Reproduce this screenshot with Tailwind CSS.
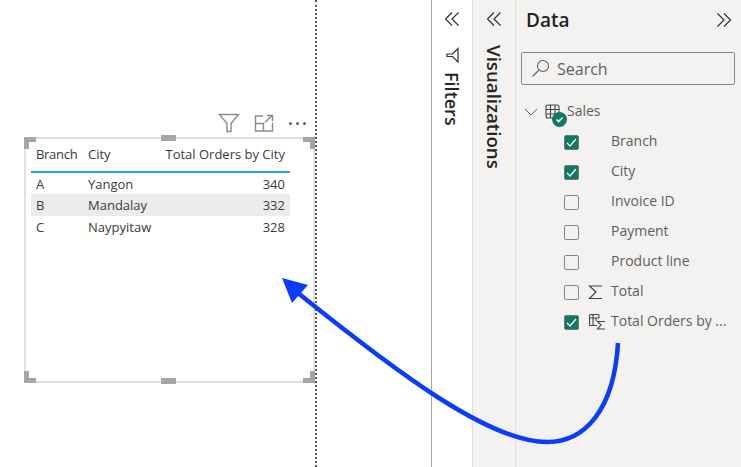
<!DOCTYPE html>
<html lang="en">
<head>
    <meta charset="UTF-8">
    <title>Data pane</title>
    <script src="https://cdn.jsdelivr.net/npm/@tailwindcss/browser@4"></script>
</head>
<body class="bg-white overflow-hidden font-['Open_Sans',sans-serif]">
<div class="relative flex w-[741px] h-[467px] overflow-hidden">

    <!-- report canvas -->
    <div class="relative w-[431px] h-full bg-white shrink-0">
        <div class="absolute left-[315px] top-0 h-full border-l-2 border-dotted border-[#5a5a5a]"></div>

        <!-- visual header -->
        <div class="absolute left-[218px] top-[112px] flex items-center gap-[14px] text-[#8a8a8a]">
            <svg width="22" height="22" viewBox="0 0 22 22" fill="none" stroke="#8a8a8a" stroke-width="1.4"><path d="M1.500 2.500h19l-7.500 9v8h-4v-8z"/></svg>
            <svg width="20" height="20" viewBox="0 0 20 20" fill="none" stroke="#8a8a8a" stroke-width="1.4"><path d="M9 3H1.500v15h17V9.500M1.500 10.500H9.500V18M11 9.500L18 2.500M13 2.500h5.500V8"/></svg>
            <div class="flex gap-[4px] ml-[1px]">
                <span class="w-[3px] h-[3px] rounded-full bg-[#666]"></span>
                <span class="w-[3px] h-[3px] rounded-full bg-[#666]"></span>
                <span class="w-[3px] h-[3px] rounded-full bg-[#666]"></span>
            </div>
        </div>

        <!-- table visual -->
        <div class="absolute left-[24px] top-[137px] w-[291px] h-[246px] border-2 border-[#e1e1e1] pl-[5px] pr-[23px] text-[13px] leading-[21px] text-[#3b3a39]">
            <div class="grid grid-cols-[52px_76px_1fr] h-[34px] border-b-2 border-[#2d9cf0] px-[5px] pt-[5px]">
                <span class="tracking-[-0.3px]">Branch</span><span>City</span><span class="text-right">Total Orders by City</span>
            </div>
            <div class="grid grid-cols-[52px_76px_1fr] h-[21px] px-[5px] pt-[1px]">
                <span>A</span><span>Yangon</span><span class="text-right">340</span>
            </div>
            <div class="grid grid-cols-[52px_76px_1fr] h-[22px] px-[5px] pt-[1px] bg-[#ececec]">
                <span>B</span><span>Mandalay</span><span class="text-right">332</span>
            </div>
            <div class="grid grid-cols-[52px_76px_1fr] h-[21px] px-[5px] pt-[1px]">
                <span>C</span><span>Naypyitaw</span><span class="text-right">328</span>
            </div>

            <!-- resize handles -->
            <span class="absolute -left-[2px] -top-[2px] w-[12px] h-[12px] border-l-[5px] border-t-[5px] border-[#a6a6a6]"></span>
            <span class="absolute -right-[2px] -top-[2px] w-[12px] h-[12px] border-r-[5px] border-t-[5px] border-[#a6a6a6]"></span>
            <span class="absolute -left-[2px] -bottom-[2px] w-[12px] h-[12px] border-l-[5px] border-b-[5px] border-[#a6a6a6]"></span>
            <span class="absolute -right-[2px] -bottom-[2px] w-[12px] h-[12px] border-r-[5px] border-b-[5px] border-[#a6a6a6]"></span>
            <span class="absolute left-[135px] -top-[4px] w-[15px] h-[6px] bg-[#a6a6a6]"></span>
            <span class="absolute left-[135px] -bottom-[3px] w-[15px] h-[6px] bg-[#a6a6a6]"></span>
        </div>
    </div>

    <!-- filters pane -->
    <div class="w-[41px] h-full bg-white border-l border-[#a8a8a8] shrink-0 flex flex-col items-center pt-[11px] text-[#252423]">
        <svg width="16" height="16" viewBox="0 0 16 16" fill="none" stroke="#323130" stroke-width="1.2"><path d="M8 1.500L1.500 8 8 14.500M14.500 1.500L8 8l6.500 6.500"/></svg>
        <svg class="mt-[20px]" width="16" height="16" viewBox="0 0 16 16" fill="none" stroke="#323130" stroke-width="1.2"><path d="M14 1.500V15L8.500 9.500H3V7h5.500z"/></svg>
        <span class="mt-[9px] [writing-mode:vertical-rl] text-[18px] leading-[20px] font-semibold">Filters</span>
    </div>

    <!-- visualizations pane -->
    <div class="w-[43px] h-full bg-[#f3f2f1] border-l border-[#e1dfdd] shrink-0 flex flex-col items-center pt-[11px] text-[#252423]">
        <svg width="16" height="16" viewBox="0 0 16 16" fill="none" stroke="#323130" stroke-width="1.2"><path d="M8 1.500L1.500 8 8 14.500M14.500 1.500L8 8l6.500 6.500"/></svg>
        <span class="mt-[18px] [writing-mode:vertical-rl] text-[18.7px] leading-[20px] font-semibold">Visualizations</span>
    </div>

    <!-- data pane -->
    <div class="flex-1 h-full bg-[#f3f2f1] border-l border-[#e1dfdd] pl-[5px] pr-[6px]">
        <div class="flex items-center justify-between h-[40px] pl-[5px] pr-[3px]">
            <span class="text-[19px] font-semibold text-[#252423]">Data</span>
            <svg width="16" height="16" viewBox="0 0 16 16" fill="none" stroke="#323130" stroke-width="1.2"><path d="M8 1.500L14.500 8 8 14.500M1.500 1.500L8 8l-6.500 6.500"/></svg>
        </div>
        <div class="flex items-center h-[33px] mt-[12px] pl-[9px] gap-[7px] border border-[#8a8886] rounded-[2px] text-[16px] text-[#605e5c]">
            <svg width="19" height="19" viewBox="0 0 19 19" fill="none" stroke="#605e5c" stroke-width="1.1"><circle cx="12" cy="7" r="5.500"/><path d="M8 11l-6.500 6.500"/></svg>
            <span class="pt-[1px]">Search</span>
        </div>

        <div class="mt-[12px] text-[14px] leading-[20px] text-[#605e5c]">
            <div class="flex items-center h-[30px] pl-[3px]">
                <svg width="14" height="14" viewBox="0 0 14 14" fill="none" stroke="#605e5c" stroke-width="1"><path d="M1 4l6 6 6-6"/></svg>
                <span class="relative ml-[7px] w-[16px] h-[16px] shrink-0">
                    <svg width="16" height="16" viewBox="0 0 16 16" fill="none" stroke="#444" stroke-width="1.1"><rect x="1" y="1" width="13" height="13" rx="2"/><path d="M1 5.500h13M1 10h13M5.500 1v13M10 1v13"/></svg>
                    <span class="absolute left-[7px] top-[8px] flex items-center justify-center w-[15px] h-[15px] rounded-full bg-[#117865]">
                        <svg width="9" height="9" viewBox="0 0 9 9" fill="none" stroke="#fff" stroke-width="1.6"><path d="M1.500 4.500l2 2 4-4"/></svg>
                    </span>
                </span>
                <span class="ml-[6px] mb-[2px]">Sales</span>
            </div>

            <div class="flex items-center h-[30px] pl-[43px]">
                <span class="flex items-center justify-center w-[15px] h-[15px] rounded-[2px] bg-[#117865] border border-[#6b7b76]">
                    <svg width="11" height="11" viewBox="0 0 11 11" fill="none" stroke="#fff" stroke-width="1.2"><path d="M1 6l3 3 6-7"/></svg>
                </span>
                <span class="ml-[32px] mb-[2px]">Branch</span>
            </div>
            <div class="flex items-center h-[30px] pl-[43px]">
                <span class="flex items-center justify-center w-[15px] h-[15px] rounded-[2px] bg-[#117865] border border-[#6b7b76]">
                    <svg width="11" height="11" viewBox="0 0 11 11" fill="none" stroke="#fff" stroke-width="1.2"><path d="M1 6l3 3 6-7"/></svg>
                </span>
                <span class="ml-[32px] mb-[2px]">City</span>
            </div>
            <div class="flex items-center h-[30px] pl-[43px]">
                <span class="w-[15px] h-[15px] rounded-[2px] border border-[#8a8886]"></span>
                <span class="ml-[32px] mb-[2px]">Invoice ID</span>
            </div>
            <div class="flex items-center h-[30px] pl-[43px]">
                <span class="w-[15px] h-[15px] rounded-[2px] border border-[#8a8886]"></span>
                <span class="ml-[32px] mb-[2px]">Payment</span>
            </div>
            <div class="flex items-center h-[30px] pl-[43px]">
                <span class="w-[15px] h-[15px] rounded-[2px] border border-[#8a8886]"></span>
                <span class="ml-[32px] mb-[2px]">Product line</span>
            </div>
            <div class="flex items-center h-[30px] pl-[43px]">
                <span class="w-[15px] h-[15px] rounded-[2px] border border-[#8a8886]"></span>
                <svg class="ml-[9px]" width="15" height="16" viewBox="0 0 15 16" fill="none" stroke="#444" stroke-width="1.2"><path d="M14 2H1.500L8 8l-6.500 6.500H14"/></svg>
                <span class="ml-[8px] mb-[2px]">Total</span>
            </div>
            <div class="flex items-center h-[30px] pl-[43px]">
                <span class="flex items-center justify-center w-[15px] h-[15px] rounded-[2px] bg-[#117865] border border-[#6b7b76]">
                    <svg width="11" height="11" viewBox="0 0 11 11" fill="none" stroke="#fff" stroke-width="1.2"><path d="M1 6l3 3 6-7"/></svg>
                </span>
                <svg class="ml-[9px] shrink-0" width="18" height="18" viewBox="0 0 18 18" fill="none" stroke="#444" stroke-width="1.1"><path d="M9 12.500H2.500a1 1 0 0 1-1-1V2.500a1 1 0 0 1 1-1H10a1 1 0 0 1 1 1V5M1.500 5H11M5 1.500V12.500M8 5v3M17 8.500H9.500L13 12l-3.500 4H17"/></svg>
                <span class="ml-[5px] mb-[2px] whitespace-nowrap">Total Orders by ...</span>
            </div>
        </div>
    </div>

    <!-- annotation arrow -->
    <svg class="absolute left-0 top-0 pointer-events-none" width="741" height="467" viewBox="0 0 741 467" fill="none">
        <path d="M618 343C614 410 585 442 547 442C490 442 400 375 298 293" stroke="#0a3cff" stroke-width="4.500"/>
        <path d="M282 278L308 285L292 303Z" fill="#0a3cff"/>
    </svg>
</div>
</body>
</html>
